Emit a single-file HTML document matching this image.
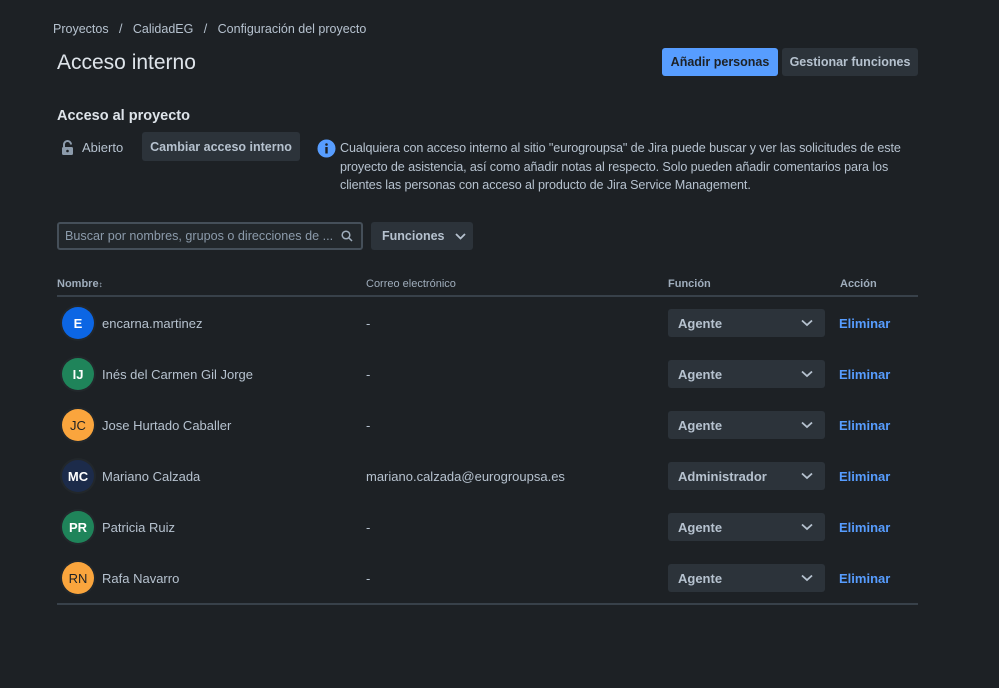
<!DOCTYPE html>
<html><head><meta charset="utf-8"><style>
*{margin:0;padding:0;box-sizing:border-box}
body{width:999px;height:688px;background:#1d2125;font-family:"Liberation Sans",sans-serif;color:#b6c2cf;font-size:13px;position:relative;overflow:hidden}
.a{position:absolute;white-space:nowrap}
.btn{position:absolute;border-radius:3px;background:#2c333a;color:#b6c2cf;font-weight:bold;font-size:12.5px;display:flex;align-items:center;justify-content:center;white-space:nowrap}
.av{position:absolute;left:62px;width:32px;height:32px;border-radius:50%;color:#fff;font-size:13px;font-weight:bold;display:flex;align-items:center;justify-content:center;box-shadow:0 0 0 2px #22272b}
.sel{position:absolute;left:668px;width:157px;height:28px;border-radius:3px;background:#2c333a;font-weight:bold;color:#b6c2cf;padding-left:10px;line-height:29px}
.sel svg{position:absolute;right:12px;top:10px}
.el{position:absolute;left:839px;color:#579dff;font-weight:bold}
.th{position:absolute;top:278px;font-size:11px;font-weight:bold;color:#9fadbc}
</style></head><body>
<div class="a" style="left:53px;top:22px;color:#b6c2cf;font-size:12.5px">Proyectos &nbsp;&nbsp;/&nbsp;&nbsp; CalidadEG &nbsp;&nbsp;/&nbsp;&nbsp; Configuración del proyecto</div>
<div class="a" style="left:57px;top:51px;font-size:21px;color:#dee4ea">Acceso interno</div>
<div class="btn" style="left:662px;top:48px;width:116px;height:28px;background:#579dff;color:#1d2125">Añadir personas</div>
<div class="btn" style="left:782px;top:48px;width:136px;height:28px">Gestionar funciones</div>
<div class="a" style="left:57px;top:108px;font-size:14.5px;font-weight:bold;color:#dee4ea">Acceso al proyecto</div>
<svg class="a" style="left:61px;top:140px" width="13" height="16" viewBox="0 0 13 16"><path d="M3 7V4.5a3.5 3.5 0 0 1 7 0" fill="none" stroke="#8c9bab" stroke-width="2"/><rect x="1" y="7" width="11" height="8" rx="1.5" fill="#8c9bab"/><circle cx="6.5" cy="11" r="1.3" fill="#1d2125"/></svg>
<div class="a" style="left:82px;top:140px">Abierto</div>
<div class="btn" style="left:142px;top:132px;width:158px;height:29px">Cambiar acceso interno</div>
<svg class="a" style="left:317px;top:139px" width="19" height="19" viewBox="0 0 19 19"><circle cx="9.5" cy="9.5" r="9" fill="#579dff"/><rect x="8.3" y="8" width="2.4" height="6.5" fill="#1d2125"/><circle cx="9.5" cy="5.5" r="1.3" fill="#1d2125"/></svg>
<div class="a" style="left:340px;top:139px;line-height:18.5px;font-size:12.6px;letter-spacing:-0.1px">Cualquiera con acceso interno al sitio "eurogroupsa" de Jira puede buscar y ver las solicitudes de este<br>proyecto de asistencia, así como añadir notas al respecto. Solo pueden añadir comentarios para los<br>clientes las personas con acceso al producto de Jira Service Management.</div>
<div class="a" style="left:57px;top:222px;width:306px;height:28px;border:2px solid #454f59;border-radius:3px;background:#22272b;padding:5px 0 0 6px;color:#8c9bab;font-size:12.6px">Buscar por nombres, grupos o direcciones de ...</div>
<svg class="a" style="left:341px;top:230px" width="12" height="12" viewBox="0 0 12 12"><circle cx="5" cy="5" r="3.8" fill="none" stroke="#9fadbc" stroke-width="1.5"/><path d="M8 8l3 3" stroke="#9fadbc" stroke-width="1.5"/></svg>
<div class="btn" style="left:371px;top:222px;width:102px;height:28px;justify-content:flex-start;padding-left:11px">Funciones<svg style="margin-left:10px" width="11" height="7" viewBox="0 0 11 7"><path d="M1 1l4.5 4.5L10 1" fill="none" stroke="#b6c2cf" stroke-width="1.8"/></svg></div>
<div class="th" style="left:57px">Nombre<span style="font-size:8px">&#x2195;</span></div>
<div class="th" style="left:366px;font-weight:normal">Correo electrónico</div>
<div class="th" style="left:668px">Función</div>
<div class="th" style="left:840px">Acción</div>
<div class="a" style="left:57px;top:295px;width:861px;height:2px;background:#38414a"></div>
<div class="a" style="left:57px;top:603px;width:861px;height:2px;background:#38414a"></div>

<div class="av" style="top:307px;background:#0c66e4">E</div><div class="a" style="left:102px;top:316px">encarna.martinez</div><div class="a" style="left:366px;top:316px">-</div>
<div class="sel" style="top:309px">Agente<svg width="12" height="8" viewBox="0 0 12 8"><path d="M1 1.5l5 4.5 5-4.5" fill="none" stroke="#b6c2cf" stroke-width="1.8"/></svg></div><div class="el" style="top:316px">Eliminar</div>

<div class="av" style="top:358px;background:#1f845a">IJ</div><div class="a" style="left:102px;top:367px">Inés del Carmen Gil Jorge</div><div class="a" style="left:366px;top:367px">-</div>
<div class="sel" style="top:360px">Agente<svg width="12" height="8" viewBox="0 0 12 8"><path d="M1 1.5l5 4.5 5-4.5" fill="none" stroke="#b6c2cf" stroke-width="1.8"/></svg></div><div class="el" style="top:367px">Eliminar</div>

<div class="av" style="top:409px;background:#faa53d;color:#1d2125;font-weight:normal">JC</div><div class="a" style="left:102px;top:418px">Jose Hurtado Caballer</div><div class="a" style="left:366px;top:418px">-</div>
<div class="sel" style="top:411px">Agente<svg width="12" height="8" viewBox="0 0 12 8"><path d="M1 1.5l5 4.5 5-4.5" fill="none" stroke="#b6c2cf" stroke-width="1.8"/></svg></div><div class="el" style="top:418px">Eliminar</div>

<div class="av" style="top:460px;background:#1c2b4a">MC</div><div class="a" style="left:102px;top:469px">Mariano Calzada</div><div class="a" style="left:366px;top:469px">mariano.calzada@eurogroupsa.es</div>
<div class="sel" style="top:462px">Administrador<svg width="12" height="8" viewBox="0 0 12 8"><path d="M1 1.5l5 4.5 5-4.5" fill="none" stroke="#b6c2cf" stroke-width="1.8"/></svg></div><div class="el" style="top:469px">Eliminar</div>

<div class="av" style="top:511px;background:#1f845a">PR</div><div class="a" style="left:102px;top:520px">Patricia Ruiz</div><div class="a" style="left:366px;top:520px">-</div>
<div class="sel" style="top:513px">Agente<svg width="12" height="8" viewBox="0 0 12 8"><path d="M1 1.5l5 4.5 5-4.5" fill="none" stroke="#b6c2cf" stroke-width="1.8"/></svg></div><div class="el" style="top:520px">Eliminar</div>

<div class="av" style="top:562px;background:#faa53d;color:#1d2125;font-weight:normal">RN</div><div class="a" style="left:102px;top:571px">Rafa Navarro</div><div class="a" style="left:366px;top:571px">-</div>
<div class="sel" style="top:564px">Agente<svg width="12" height="8" viewBox="0 0 12 8"><path d="M1 1.5l5 4.5 5-4.5" fill="none" stroke="#b6c2cf" stroke-width="1.8"/></svg></div><div class="el" style="top:571px">Eliminar</div>
</body></html>
